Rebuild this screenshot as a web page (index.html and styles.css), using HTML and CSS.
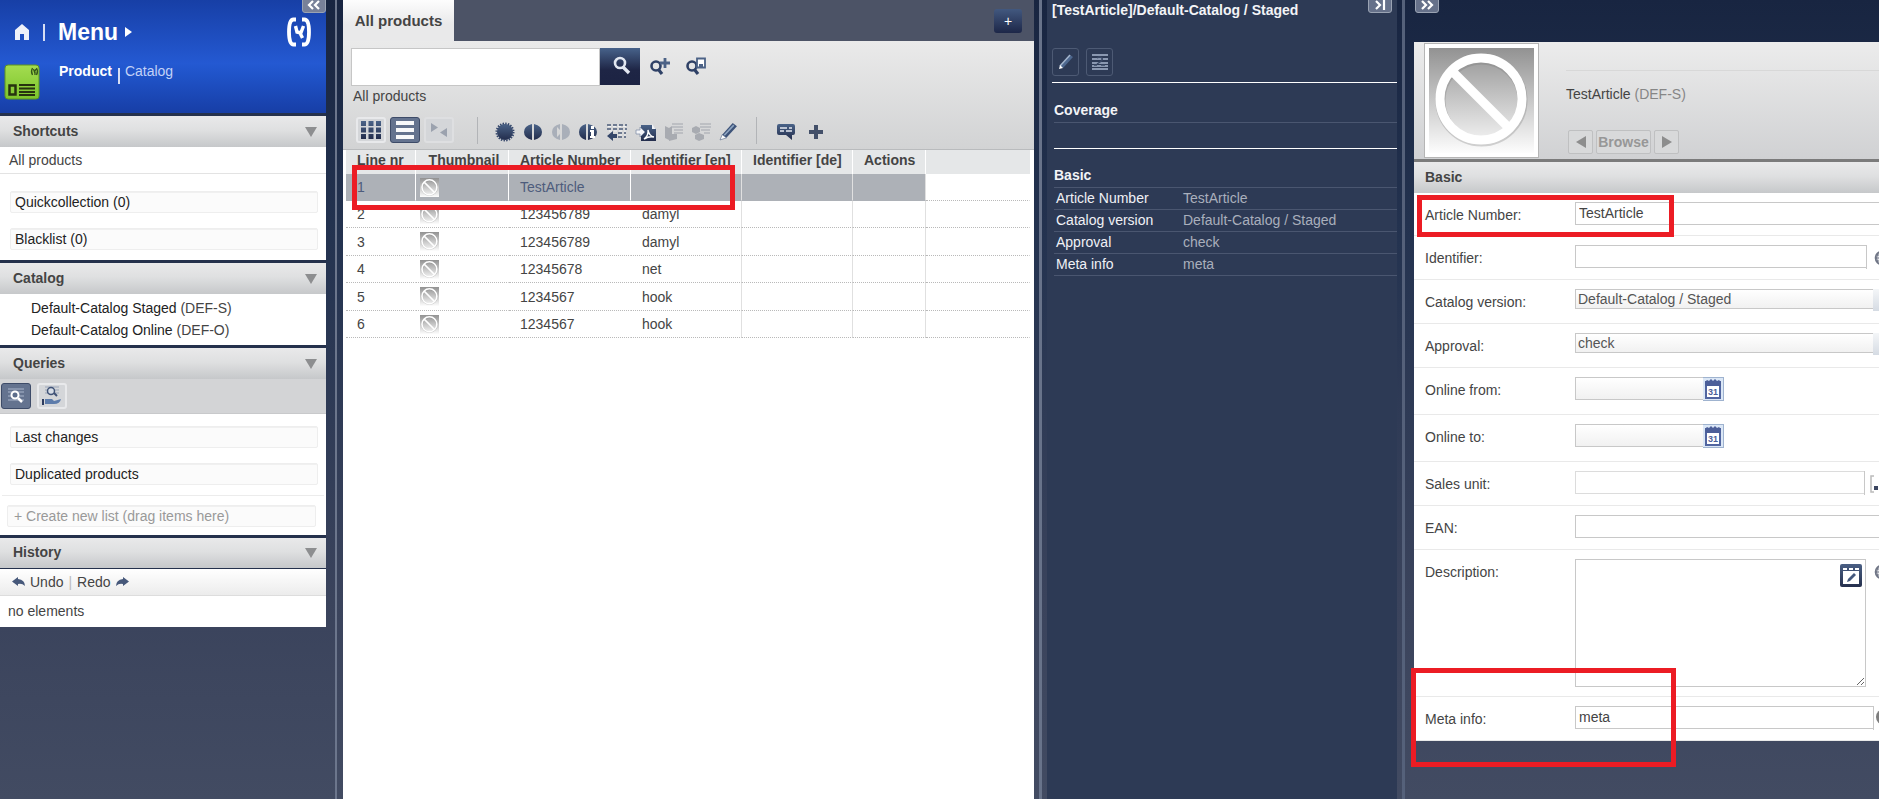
FILE: index.html
```html
<!DOCTYPE html>
<html lang="en">
<head>
<meta charset="utf-8">
<title>Product Cockpit</title>
<link rel="stylesheet" href="styles.css">
</head>
<body>
<svg class="defs" aria-hidden="true">
  <defs>
    <linearGradient id="fade" x1="0" y1="0" x2="0" y2="1"><stop offset="0" stop-color="#929292"/><stop offset="1" stop-color="#fdfdfd"/></linearGradient>
    <linearGradient id="navy" x1="0" y1="0" x2="0" y2="1"><stop offset="0" stop-color="#4a6388"/><stop offset="1" stop-color="#232d4c"/></linearGradient>
    <linearGradient id="lime" x1="0" y1="0" x2="0" y2="1"><stop offset="0" stop-color="#a4dc50"/><stop offset="1" stop-color="#7cc52c"/></linearGradient>
  </defs>
  <symbol id="i-none" viewBox="0 0 105 105">
    <rect width="105" height="105" fill="url(#fade)"/>
    <g fill="none" stroke="#777" stroke-opacity=".3" stroke-width="10"><circle cx="52.500" cy="52.500" r="41"/></g>
    <g fill="none" stroke="#fff" stroke-width="9"><circle cx="52" cy="51" r="41"/><path d="M23 23l57 57"/></g>
  </symbol>
  <symbol id="i-glass" viewBox="0 0 20 20"><circle cx="8" cy="7" r="5" fill="none" stroke="currentColor" stroke-width="2.600"/><path d="M11 11l6 6" stroke="currentColor" stroke-width="3.400"/></symbol>
  <symbol id="i-pencil" viewBox="0 0 18 18"><path d="M3 12L13 1l4 3L7 15z" fill="currentColor"/><path d="M5 12.500L14 3" stroke="#8fa6c2" stroke-width="1.500"/><path d="M3 12l4 3-6 2z" fill="#fff" stroke="currentColor" stroke-width=".5"/></symbol>
  <symbol id="i-globe" viewBox="0 0 16 16"><circle cx="8" cy="8" r="6.500" fill="#e8e8ec" stroke="#6f7585" stroke-width="1.600"/><path d="M8 1v14M1 8h14M4 3q-3 5 0 10M12 3q3 5 0 10M3 5h10M3 11h10" fill="none" stroke="#6f7585"/></symbol>
  <symbol id="i-cal" viewBox="0 0 21 24">
    <path d="M3 5h14v16H3z" fill="#fff" stroke="#5165a0" stroke-width="2"/><path d="M2 5l2-2 2 1 2-2 2 2 2-2 2 2 2-1 2 2v4H2z" fill="#4c5f99"/>
    <text x="10" y="18" class="cal-num" text-anchor="middle">31</text>
  </symbol>
</svg>

<div class="cockpit">
  <aside class="nav">
    <button class="fold fold-nav" aria-label="Collapse navigation"><svg width="14" height="10" viewBox="0 0 14 10"><path d="M6 1L2 5l4 4M12 1L8 5l4 4" fill="none" stroke="#fff" stroke-width="2.200"/></svg></button>
    <header class="brand">
      <div class="brand-row">
        <svg class="home" width="16" height="18" viewBox="0 0 16 18"><path d="M8 1l7 6v10h-5v-6H6v6H1V7z" fill="#eef1fa"/></svg>
        <span class="bar"></span>
        <button class="menu">Menu<svg width="7" height="10" viewBox="0 0 7 10"><path d="M0 0l7 5-7 5z" fill="#fff"/></svg></button>
        <svg class="logo" width="26" height="30" viewBox="0 0 26 30"><g fill="none" stroke="#fff"><path d="M10 2.500H7.500Q3 2.500 3 15t4.500 12.500H10M16 2.500h2.500Q23 2.500 23 15t-4.500 12.500H16" stroke-width="3.800"/><path d="M9.500 9l1.500 6 4 1M17.500 9l-3 8 2 4" stroke-width="3.400"/></g></svg>
      </div>
      <div class="brand-row second">
        <svg width="36" height="36" viewBox="0 0 36 36"><rect x="1" y="1" width="34" height="34" rx="3" fill="url(#lime)" stroke="#5f9420"/><path d="M28.500 4q-2 3.500 0 7M32.500 4q2 3.500 0 7M29.500 5l1 3 1.500-3M31 8v3" fill="none" stroke="#35571a" stroke-width="1.300"/><path d="M5.500 21.500h6v9h-6z" fill="none" stroke="#27330f" stroke-width="2.500"/><path d="M15 21h16M15 24.500h16M15 28h16M15 31h16" stroke="#27330f" stroke-width="1.800"/></svg>
        <nav class="areas"><a href="#" class="on">Product</a><span class="bar small"></span><a href="#">Catalog</a></nav>
      </div>
    </header>

    <section>
      <h2 class="head">Shortcuts <span class="tri"></span></h2>
      <div class="line-item">All products</div>
      <ul class="slots"><li>Quickcollection (0)</li><li>Blacklist (0)</li></ul>
    </section>
    <section>
      <h2 class="head">Catalog <span class="tri"></span></h2>
      <ul class="tree"><li>Default-Catalog Staged <span>(DEF-S)</span></li><li>Default-Catalog Online <span>(DEF-O)</span></li></ul>
    </section>
    <section>
      <h2 class="head">Queries <span class="tri"></span></h2>
      <div class="qbar">
        <button class="tool pressed" aria-label="My queries"><svg width="18" height="16" viewBox="0 0 18 16"><path d="M1 1h16M1 4h16M1 8h16M1 12h16" stroke="#a9b6cb"/><circle cx="8" cy="7" r="3.500" fill="#5c6d8b" stroke="#fff" stroke-width="2"/><path d="M11 10l4 4" stroke="#fff" stroke-width="2.500"/></svg></button>
        <button class="tool" aria-label="Shared queries"><svg width="22" height="20" viewBox="0 0 22 20"><path d="M4 1h14M4 4h14M4 7h14" stroke="#9aa5b8"/><circle cx="10" cy="5" r="3.500" fill="#d7dde6" stroke="#3f5276" stroke-width="1.500"/><path d="M13 7l3 3" stroke="#3f5276" stroke-width="2"/><path d="M1 13h2v6H1z" fill="#2c3b5e"/><path d="M4 13h7l2 2 7-2q-1 5-7 5H4z" fill="#5d7cab"/></svg></button>
      </div>
      <ul class="slots"><li>Last changes</li><li>Duplicated products</li></ul>
      <div class="new-list"><button class="create">+ Create new list (drag items here)</button></div>
    </section>
    <section>
      <h2 class="head">History <span class="tri"></span></h2>
      <div class="undo">
        <button><svg width="13" height="10" viewBox="0 0 13 10"><path d="M6 0v2q7 1 7 7-3-3-7-2v2L0 4.500z" fill="#46587a"/></svg>Undo</button><span>|</span><button>Redo<svg width="13" height="10" viewBox="0 0 13 10"><path d="M7 0v2Q0 3 0 9q3-3 7-2v2l6-4.500z" fill="#46587a"/></svg></button>
      </div>
      <div class="empty">no elements</div>
    </section>
  </aside>

  <div class="split"></div>

  <main class="browser">
    <div class="tabs"><button class="tab">All products</button><button class="plus" aria-label="New tab">+</button></div>
    <div class="tools">
      <form class="search">
        <input type="text" aria-label="Search">
        <button type="button" class="go" aria-label="Search"><svg width="20" height="20"><use href="#i-glass"/></svg></button>
        <svg class="ic" width="22" height="20" viewBox="0 0 22 20"><circle cx="7" cy="9" r="4.500" fill="none" stroke="#2f4166" stroke-width="2.600"/><path d="M9 12l4 5" stroke="#2f4166" stroke-width="3.200"/><path d="M16 1v10M11 6h10" stroke="#4c6286" stroke-width="2.800"/></svg>
        <svg class="ic" width="22" height="20" viewBox="0 0 22 20"><circle cx="7" cy="9" r="4.500" fill="none" stroke="#2f4166" stroke-width="2.600"/><path d="M9 12l4 5" stroke="#2f4166" stroke-width="3.200"/><path d="M12 1.500h8v9h-8z" fill="#fff" stroke="#4c6286" stroke-width="1.800"/><path d="M14 7h4v4h-4z" fill="#4c6286"/></svg>
      </form>
      <div class="crumb">All products</div>
      <div class="actions">
        <button class="tool" aria-label="Grid view"><svg width="20" height="18" viewBox="0 0 20 18" fill="url(#navy)"><path d="M0 0h5v5H0zM7.500 0h5v5h-5zM15 0h5v5h-5zM0 6.500h5v5H0zM7.500 6.500h5v5h-5zM15 6.500h5v5h-5zM0 13h5v5H0zM7.500 13h5v5h-5zM15 13h5v5h-5z"/></svg></button>
        <button class="tool pressed" aria-label="List view"><svg width="18" height="18" viewBox="0 0 18 18" fill="#f7f8fa"><path d="M0 0h18v4H0zM0 7h18v4H0zM0 14h18v4H0z"/></svg></button>
        <button class="tool off" aria-label="Compare view"><svg width="16" height="14" viewBox="0 0 16 14" fill="#9ba2ae"><path d="M0 0l7 4.500L0 9zM16 5v9L9 9.500z"/></svg></button>
        <i class="rule"></i>
        <div class="icons">
          <svg width="20" height="20" viewBox="0 0 20 20"><circle cx="10" cy="10" r="8" fill="url(#navy)"/><circle cx="10" cy="10" r="8.500" fill="none" stroke="#34466a" stroke-width="2" stroke-dasharray="1.400 1.270"/></svg>
          <svg width="20" height="20" viewBox="0 0 20 20" fill="url(#navy)"><path d="M9 2v16Q1 16 1 10t8-8zM11 2v16q8-2 8-8t-8-8z"/></svg>
          <svg width="20" height="20" viewBox="0 0 20 20" fill="#a9afb9"><path d="M9 2v6L6 5v10l3-3v6q-8-2-8-8t8-8zM11 2v16q8-2 8-8t-8-8z"/></svg>
          <svg width="20" height="20" viewBox="0 0 20 20"><path d="M8 2v16Q1 16 1 10t7-8zM10 2v16q9-2 9-8t-9-8z" fill="url(#navy)"/><path d="M13 4h3v3h-3zM12 8h4v6h1v2h-5v-2h1v-4h-1z" fill="#fff"/></svg>
          <svg width="21" height="20" viewBox="0 0 21 20"><path d="M1 3h20M1 7h20M12 11h8M12 15h8" stroke="#4c5c79" stroke-width="1.600" stroke-dasharray="4 2"/><path d="M2 4.500h19M3 9h17M13 13h7" stroke="#f1f2f4" stroke-dasharray="3 2"/><path d="M1 14l6-5v3h4v4H7v3z" fill="#344669"/></svg>
          <svg width="21" height="20" viewBox="0 0 21 20"><path d="M6 3h11l4 4v12H6z" fill="url(#navy)"/><path d="M17 2v5h4" fill="#f2f3f6"/><path d="M9 17q5-4 4-9 1 6 6 7-5-1-10 2" fill="none" stroke="#fff" stroke-width="1.500"/><path d="M1 8h4V5l5 5-5 5v-3H1z" fill="#f4f5f8" stroke="#8592aa" stroke-width=".8"/></svg>
          <svg width="20" height="20" viewBox="0 0 20 20"><path d="M1 4l4 2v12l-4-2zM5 6l3-2v8h5v5l-8 2z" fill="#a8abb1"/><path d="M8 2h11M8 5h11M10 8h9M10 11h9" stroke="#b4b7bc" stroke-width="1.400"/></svg>
          <svg width="20" height="20" viewBox="0 0 20 20"><path d="M1 6l4-2 4 2v4l-4 2-4-2zM4 13l4-2 5 2v4l-5 2-4-2z" fill="#a8abb1"/><path d="M9 2h11M9 5h11M10 8h9M13 11h6" stroke="#b4b7bc" stroke-width="1.400"/></svg>
          <svg width="19" height="19" class="dark"><use href="#i-pencil"/></svg>
        </div>
        <i class="rule"></i>
        <div class="icons tail">
          <svg width="20" height="20" viewBox="0 0 20 20"><path d="M3 2h14q2 0 2 2v7q0 2-2 2h-1v5l-6-5H3q-2 0-2-2V4q0-2 2-2z" fill="url(#navy)"/><path d="M4 6h7M13 6h3M4 9h4M10 9h6" stroke="#e6eaf2" stroke-width="1.500"/></svg>
          <svg width="16" height="16" viewBox="0 0 16 16"><path d="M8 1v14M1 8h14" stroke="#435069" stroke-width="4"/></svg>
        </div>
      </div>
    </div>
    <div class="list">
      <table>
        <colgroup><col class="c-line"><col class="c-thumb"><col class="c-art"><col class="c-id"><col class="c-id"><col class="c-act"><col></colgroup>
        <thead><tr><th>Line nr</th><th class="mid">Thumbnail</th><th>Article Number</th><th>Identifier [en]</th><th>Identifier [de]</th><th>Actions</th><th></th></tr></thead>
        <tbody>
          <tr class="sel"><td>1</td><td class="pic"><svg width="19" height="19"><use href="#i-none"/></svg></td><td>TestArticle</td><td></td><td></td><td></td><td></td></tr>
          <tr><td>2</td><td class="pic"><svg width="19" height="19"><use href="#i-none"/></svg></td><td>123456789</td><td>damyl</td><td></td><td></td><td></td></tr>
          <tr><td>3</td><td class="pic"><svg width="19" height="19"><use href="#i-none"/></svg></td><td>123456789</td><td>damyl</td><td></td><td></td><td></td></tr>
          <tr><td>4</td><td class="pic"><svg width="19" height="19"><use href="#i-none"/></svg></td><td>12345678</td><td>net</td><td></td><td></td><td></td></tr>
          <tr><td>5</td><td class="pic"><svg width="19" height="19"><use href="#i-none"/></svg></td><td>1234567</td><td>hook</td><td></td><td></td><td></td></tr>
          <tr><td>6</td><td class="pic"><svg width="19" height="19"><use href="#i-none"/></svg></td><td>1234567</td><td>hook</td><td></td><td></td><td></td></tr>
        </tbody>
      </table>
      <div class="mark mark-row"></div>
    </div>
  </main>

  <div class="split thin"></div>

  <section class="info">
    <button class="fold fold-info" aria-label="Collapse info"><svg width="12" height="10" viewBox="0 0 12 10"><path d="M2 1l4 4-4 4M10 0v10" fill="none" stroke="#fff" stroke-width="2.200"/></svg></button>
    <h1>[TestArticle]/Default-Catalog / Staged</h1>
    <div class="info-tools">
      <button aria-label="Edit"><svg width="18" height="18" viewBox="0 0 18 18"><path d="M3 13L13 2l3 2L6 15z" fill="#4e688f"/><path d="M3 13L13 2" stroke="#a3b5cd" stroke-width="1.500"/><path d="M3 12l3 3-4 1z" fill="#fff"/></svg></button>
      <button aria-label="Compare"><svg width="16" height="16" viewBox="0 0 16 16"><path d="M0 1h16M0 5h16M0 9h16M0 12h16M0 15h16" stroke="#a9b8cf" stroke-width="1.600"/><path d="M5 4q3-2 5 0 1 2-2 4l-3 2M9 11h4M2 11h3" fill="none" stroke="#3a4966" stroke-width="1.500"/></svg></button>
    </div>
    <h2 class="cov">Coverage</h2>
    <h2 class="basic">Basic</h2>
    <dl>
      <div><dt>Article Number</dt><dd>TestArticle</dd></div>
      <div><dt>Catalog version</dt><dd>Default-Catalog / Staged</dd></div>
      <div><dt>Approval</dt><dd>check</dd></div>
      <div><dt>Meta info</dt><dd>meta</dd></div>
    </dl>
  </section>

  <div class="split near"></div>

  <section class="editor">
    <button class="fold fold-edit" aria-label="Collapse editor"><svg width="14" height="10" viewBox="0 0 14 10"><path d="M2 1l4 4-4 4M8 1l4 4-4 4" fill="none" stroke="#fff" stroke-width="2.200"/></svg></button>
    <header class="item">
      <div class="photo"><svg width="105" height="105"><use href="#i-none"/></svg></div>
      <div class="item-text">
        <p>TestArticle <span>(DEF-S)</span></p>
        <div class="browse"><button aria-label="Previous"><svg width="10" height="12" viewBox="0 0 10 12"><path d="M10 0v12L0 6z" fill="#8d8d8d"/></svg></button><button class="wide">Browse</button><button aria-label="Next"><svg width="10" height="12" viewBox="0 0 10 12"><path d="M0 0v12l10-6z" fill="#8d8d8d"/></svg></button></div>
      </div>
    </header>
    <h2 class="head">Basic</h2>
    <form class="fields">
      <div class="row first"><label for="art">Article Number:</label><input id="art" type="text" value="TestArticle"><div class="mark mark-art"></div></div>
      <div class="row"><label for="ident">Identifier:</label><input id="ident" type="text"><span class="edge globe"><svg width="16" height="16"><use href="#i-globe"/></svg></span></div>
      <div class="row drop"><label for="cat">Catalog version:</label><select id="cat"><option>Default-Catalog / Staged</option></select><i class="arrow"></i></div>
      <div class="row drop"><label for="appr">Approval:</label><select id="appr"><option>check</option></select><i class="arrow"></i></div>
      <div class="row date"><label for="from">Online from:</label><input id="from" type="text"><button type="button" aria-label="Pick start date"><svg width="21" height="24"><use href="#i-cal"/></svg></button></div>
      <div class="row date"><label for="to">Online to:</label><input id="to" type="text"><button type="button" aria-label="Pick end date"><svg width="21" height="24"><use href="#i-cal"/></svg></button></div>
      <div class="row"><label for="unit">Sales unit:</label><input id="unit" class="light" type="text"><span class="edge dots"><svg width="16" height="18" viewBox="0 0 16 18"><path d="M4 1H1v16h3" fill="none" stroke="#bbb" stroke-width="1.500"/><path d="M4 11h4v4H4z" fill="#3b4560"/></svg></span></div>
      <div class="row"><label for="ean">EAN:</label><input id="ean" type="text"></div>
      <div class="row area"><label for="desc">Description:</label><div class="text"><textarea id="desc"></textarea><button type="button" class="rich" aria-label="Open rich text editor"><svg width="16" height="18" viewBox="0 0 16 18"><path d="M0 1h4v2H0zM6 1h4v2H6zM12 1h4v2h-4zM0 4h16v13H0z" fill="#fff"/><path d="M5 12l6-6 2 2-6 6-3 1z" fill="#44587d"/></svg></button></div><span class="edge globe"><svg width="16" height="16"><use href="#i-globe"/></svg></span></div>
      <div class="row"><label for="meta">Meta info:</label><input id="meta" type="text" value="meta"><span class="edge help"><svg width="18" height="18" viewBox="0 0 18 18"><circle cx="9" cy="9" r="8" fill="#7d7d7d"/></svg></span><div class="mark mark-meta"></div></div>
    </form>
  </section>
</div>
</body>
</html>
```
FILE: styles.css
```css
* { box-sizing: border-box; }
body, h1, h2, p, ul, dl, dd { margin: 0; padding: 0; }
body, button, input, select, textarea {
  font-family: "Liberation Sans", Arial, sans-serif;
  font-size: 14px;
  line-height: 16px;
  color: #444;
}
ul { list-style: none; }
svg { display: block; flex: none; }
button { margin: 0; padding: 0; border: 0; background: none; display: flex; align-items: center; justify-content: center; flex: none; }
.defs { position: absolute; width: 0; height: 0; }
.cal-num { font: bold 9px "Liberation Sans", Arial, sans-serif; fill: #4c5f99; }

.cockpit {
  display: grid;
  grid-template-columns: 326px 17px minmax(0, 1fr) 13px 350px 17px 465px;
  min-height: 100vh;
  overflow: hidden;
  background: linear-gradient(#182541, #243350 30%, #3a435c 75%, #424b62);
}
.split { background: linear-gradient(90deg, transparent 9px, #6c768c 9px, #6c768c 11px, transparent 11px); }
.split.thin, .split.near { background: linear-gradient(90deg, transparent 5px, #68738a 5px, #68738a 8px, transparent 8px); }
.split.near { background: linear-gradient(90deg, transparent 5px, #55617a 5px, #55617a 8px, transparent 8px); }

.fold {
  position: absolute; top: -6px; z-index: 2; width: 24px; height: 19px;
  border: 1px solid #9aa3b3; border-radius: 3px; background: #66718a;
}
.fold svg { margin-top: 2px; }
.fold-nav { right: 0; background: #788199; }
.fold-info { right: 5px; }
.fold-edit { left: 1px; }

.mark { position: absolute; z-index: 3; border: 5px solid #ec1c24; pointer-events: none; }

.head {
  display: flex; align-items: center; justify-content: space-between;
  height: 31px; padding: 0 9px 2px 13px;
  font-size: 14px; line-height: 16px; color: #444;
  background: linear-gradient(#e9e9ea, #dfe0e1 45%, #c6c8ca);
}
.tri { border: 6px solid transparent; border-top: 10px solid #8d8e90; border-bottom: 0; margin-top: 2px; }

/* navigation */
.nav { position: relative; }
.nav section { background: #fff; border-top: 3px solid #25314c; }
.brand { height: 113px; padding-top: 17px; background: linear-gradient(#173fa6, #2459d2 56%, #2054ca 65%, #173ea6); }
.brand-row { display: flex; align-items: center; height: 30px; }
.home { margin: 0 13px 0 14px; }
.bar { width: 2px; height: 17px; background: #d6def4; }
.bar.small { height: 16px; margin: 5px 5px 0 6px; }
.menu { margin-left: 13px; gap: 7px; font-size: 23px; line-height: 26px; font-weight: bold; color: #fff; }
.logo { margin: 0 14px 0 auto; }
.second { height: 36px; margin-top: 17px; padding-left: 4px; gap: 19px; align-items: flex-start; }
.areas { display: flex; align-items: flex-start; margin-top: -1px; }
.areas a { color: #c3d2f7; text-decoration: none; }
.areas .on { color: #fff; font-weight: bold; }

.line-item { height: 27px; padding: 5px 9px; border-bottom: 1px solid #e3e3e3; }
.slots { display: grid; gap: 15px; padding: 17px 8px 10px 10px; }
.slots li, .create { height: 22px; padding: 2px 4px; border: 1px solid #eee; border-radius: 2px; background: #fbfbfb; color: #222; box-shadow: inset 0 1px #f0f0f0; }
.tree { padding: 3px 31px 4px; }
.tree li { line-height: 22px; height: 22px; color: #222; }
.tree span { color: #444; }
.qbar { display: flex; gap: 6px; align-items: center; height: 35px; padding: 0 1px; background: #d3d4d6; border-bottom: 1px solid #c8c9cb; }
.qbar + .slots { padding: 12px 8px 10px 10px; }
.new-list { margin: 0 2px; padding: 9px 8px 8px 5px; border-top: 1px solid #ececec; }
.create { width: 100%; justify-content: flex-start; padding: 0 6px; color: #999; }
.nav section:last-child .head { border-bottom: 1px solid #25314c; }
.undo { display: flex; align-items: center; gap: 5px; height: 27px; padding: 0 12px; background: linear-gradient(#fff, #ececec); border-bottom: 1px solid #ddd; }
.undo span { color: #bbb; }
.undo button { gap: 5px; }
.empty { padding: 7px 8px 8px; }

.tool { width: 30px; height: 26px; border: 2px solid #e8e9eb; border-radius: 3px; background: #d4d6d9; }
.tool.pressed { border: 1px solid #3d4b68; background: #64738f; }
.tool.off { border-color: #dedfe1; }

/* product list */
.browser { background: #fff; }
.tabs { display: flex; justify-content: space-between; height: 41px; background: #4c5366; }
.tab { width: 111px; font-weight: bold; font-size: 15px; background: linear-gradient(#fdfdfd, #e9e9ea 60%); }
.plus { width: 28px; height: 24px; margin: 9px 12px 0 0; border-radius: 3px; color: #fff; background: linear-gradient(#42587f, #1d2748); }
.tools { height: 109px; padding: 7px 8px 0; background: linear-gradient(#eaeaea, #d2d3d4); border-bottom: 1px solid #b9bbbd; }
.search { display: flex; align-items: flex-start; }
.search input { width: 249px; height: 38px; border: 1px solid #c6c6c6; background: #fff; padding: 0 6px; }
.go { width: 40px; height: 37px; padding: 0 0 2px 4px; color: #e3e8f1; background: linear-gradient(#47628a, #1e2545 60%, #1c2343); }
.search .ic { margin: 9px 0 0 9px; }
.search .ic + .ic { margin-left: 14px; }
.crumb { padding: 2px 2px; height: 30px; }
.actions { display: flex; align-items: center; padding: 0 5px; height: 28px; }
.actions .tool { margin-right: 4px; }
.rule { width: 1px; height: 27px; background: #b2b4b7; margin: 0 17px 0 19px; }
.icons { display: flex; align-items: center; justify-content: space-between; width: 243px; padding-top: 3px; }
.icons.tail { width: 48px; }
.icons + .rule { margin-left: 18px; margin-right: 19px; }
.dark { color: #3d5379; }

.list { position: relative; padding: 0 4px 0 3px; }
table { width: 100%; table-layout: fixed; border-collapse: separate; border-spacing: 0; }
.c-line { width: 70px; } .c-thumb { width: 93px; } .c-art { width: 122px; }
.c-id { width: 111px; } .c-act { width: 73px; }
th { height: 24px; padding: 0 0 4px 11px; text-align: left; background: #e5e7e8; border-right: 1px solid #fff; white-space: nowrap; }
th.mid { text-align: center; padding-left: 4px; }
th:last-child { border-right: 0; }
td { height: 27px; padding: 0 0 0 11px; border-bottom: 1px dotted #b9b9b9; border-right: 1px solid transparent; background-clip: padding-box; }
tr:nth-child(2n+3) td { height: 28px; }
td:nth-child(n+4):nth-child(-n+6) { border-right-color: #e0e0e0; }
.pic { padding: 0 4px 0; }
.sel td { height: 27px; color: #4d5c7c; background: #adb1b7; border-right-color: #fff; border-bottom-color: #adb1b7; }
.sel td:last-child { background: #fff; border-bottom-color: #b9b9b9; }
.mark-row { left: 9px; top: 15px; width: 383px; height: 45px; }

/* info area */
.info { position: relative; padding-left: 5px; background: #2d3a55; color: #fff; }
.info h1, .info h2 { font-size: 14px; line-height: 16px; color: #f3f4f7; }
.info h1 { padding-top: 2px; }
.info-tools { display: flex; gap: 7px; padding: 30px 0 6px; border-bottom: 1px solid #fff; }
.info-tools button { width: 27px; height: 28px; border: 1px solid #4d5a74; border-radius: 3px; }
.info .cov { margin-left: 2px; padding: 19px 0 4px; border-bottom: 1px solid #4a5670; }
.info .basic { margin: 25px 0 0 2px; padding: 18px 0 4px; border-top: 1px solid #fff; border-bottom: 1px solid #4a5670; }
dl { margin-left: 2px; }
dl div { display: grid; grid-template-columns: 127px 1fr; padding: 2px; height: 22px; border-bottom: 1px solid #4a5670; }
dt { color: #f0f1f5; }
dd { color: #a9afbc; }

/* editor */
.editor { position: relative; padding-top: 42px; }
.item { display: flex; height: 120px; padding: 1px 0 0 10px; background: linear-gradient(#ececec, #d0d1d3); border-bottom: 3px solid #7b7b7b; }
.photo { width: 115px; height: 115px; padding: 4px; background: #fff; border: 1px solid #b5b5b5; }
.item-text { flex: 1; margin: 27px 0 0 27px; padding-top: 15px; border-top: 1px solid #d8d8d8; }
.item-text span { color: #868686; }
.browse { display: flex; gap: 3px; padding: 28px 2px 0; }
.browse button { width: 25px; height: 24px; border: 1px solid #bfc0c1; border-radius: 2px; background: #d8d9da; color: #979797; font-weight: bold; }
.browse .wide { width: 55px; }
.editor .head { padding-left: 11px; padding-bottom: 1px; }
.fields { background: #fff; }
.row { position: relative; display: flex; align-items: flex-start; height: 44px; padding-top: 9px; border-bottom: 1px solid #e9e9e9; }
.row.first { height: 43px; }
.row label { width: 161px; flex: none; padding: 5px 0 0 11px; }
.row input { flex: 1; min-width: 0; height: 23px; padding: 0 3px 2px; border: 1px solid #c8c8c8; border-right: 0; border-radius: 0; background: #fff; }
.row select { flex: 1; appearance: none; height: 20px; margin: 0; padding: 0 2px 1px; border: 1px solid #c8c8c8; border-right: 0; border-radius: 0; background: linear-gradient(#fff, #f1f1f1); color: #555; }
.arrow { width: 6px; height: 22px; background: linear-gradient(#f4f6f8, #d5dbe3); }
.edge { width: 13px; height: 24px; padding: 5px 0 0 7px; overflow: hidden; border-left: 1px solid #c8c8c8; border-image: linear-gradient(#c8c8c8 23px, transparent 23px) 1; }
.dots { width: 15px; padding: 4px 0 0 5px; }
.help { width: 6px; padding: 2px 0 0 1px; }
.row .light { border-color: #dcdcdc; }
.row.date { height: 47px; }
.row.date input { flex: 0 0 128px; background: linear-gradient(#fff, #f1f1f1); }
.row.date button { width: 21px; height: 24px; background: #dbe7f6; border: 1px solid #9fb3cf; border-left: 0; }
.row.area { height: 147px; }
.text { position: relative; flex: 1; display: flex; }
textarea { width: 100%; height: 128px; border: 1px solid #c8c8c8; margin: 0; padding: 3px; resize: vertical; border-radius: 0; }
.area .edge { border-image: none; border-left-color: transparent; }
.rich { position: absolute; top: 5px; right: 4px; width: 22px; height: 23px; border-radius: 2px; background: linear-gradient(#4a5f84, #26304d); }
.mark-art { left: 3px; top: 2px; width: 257px; height: 42px; }
.mark-meta { left: -3px; top: -29px; width: 265px; height: 99px; }
```
